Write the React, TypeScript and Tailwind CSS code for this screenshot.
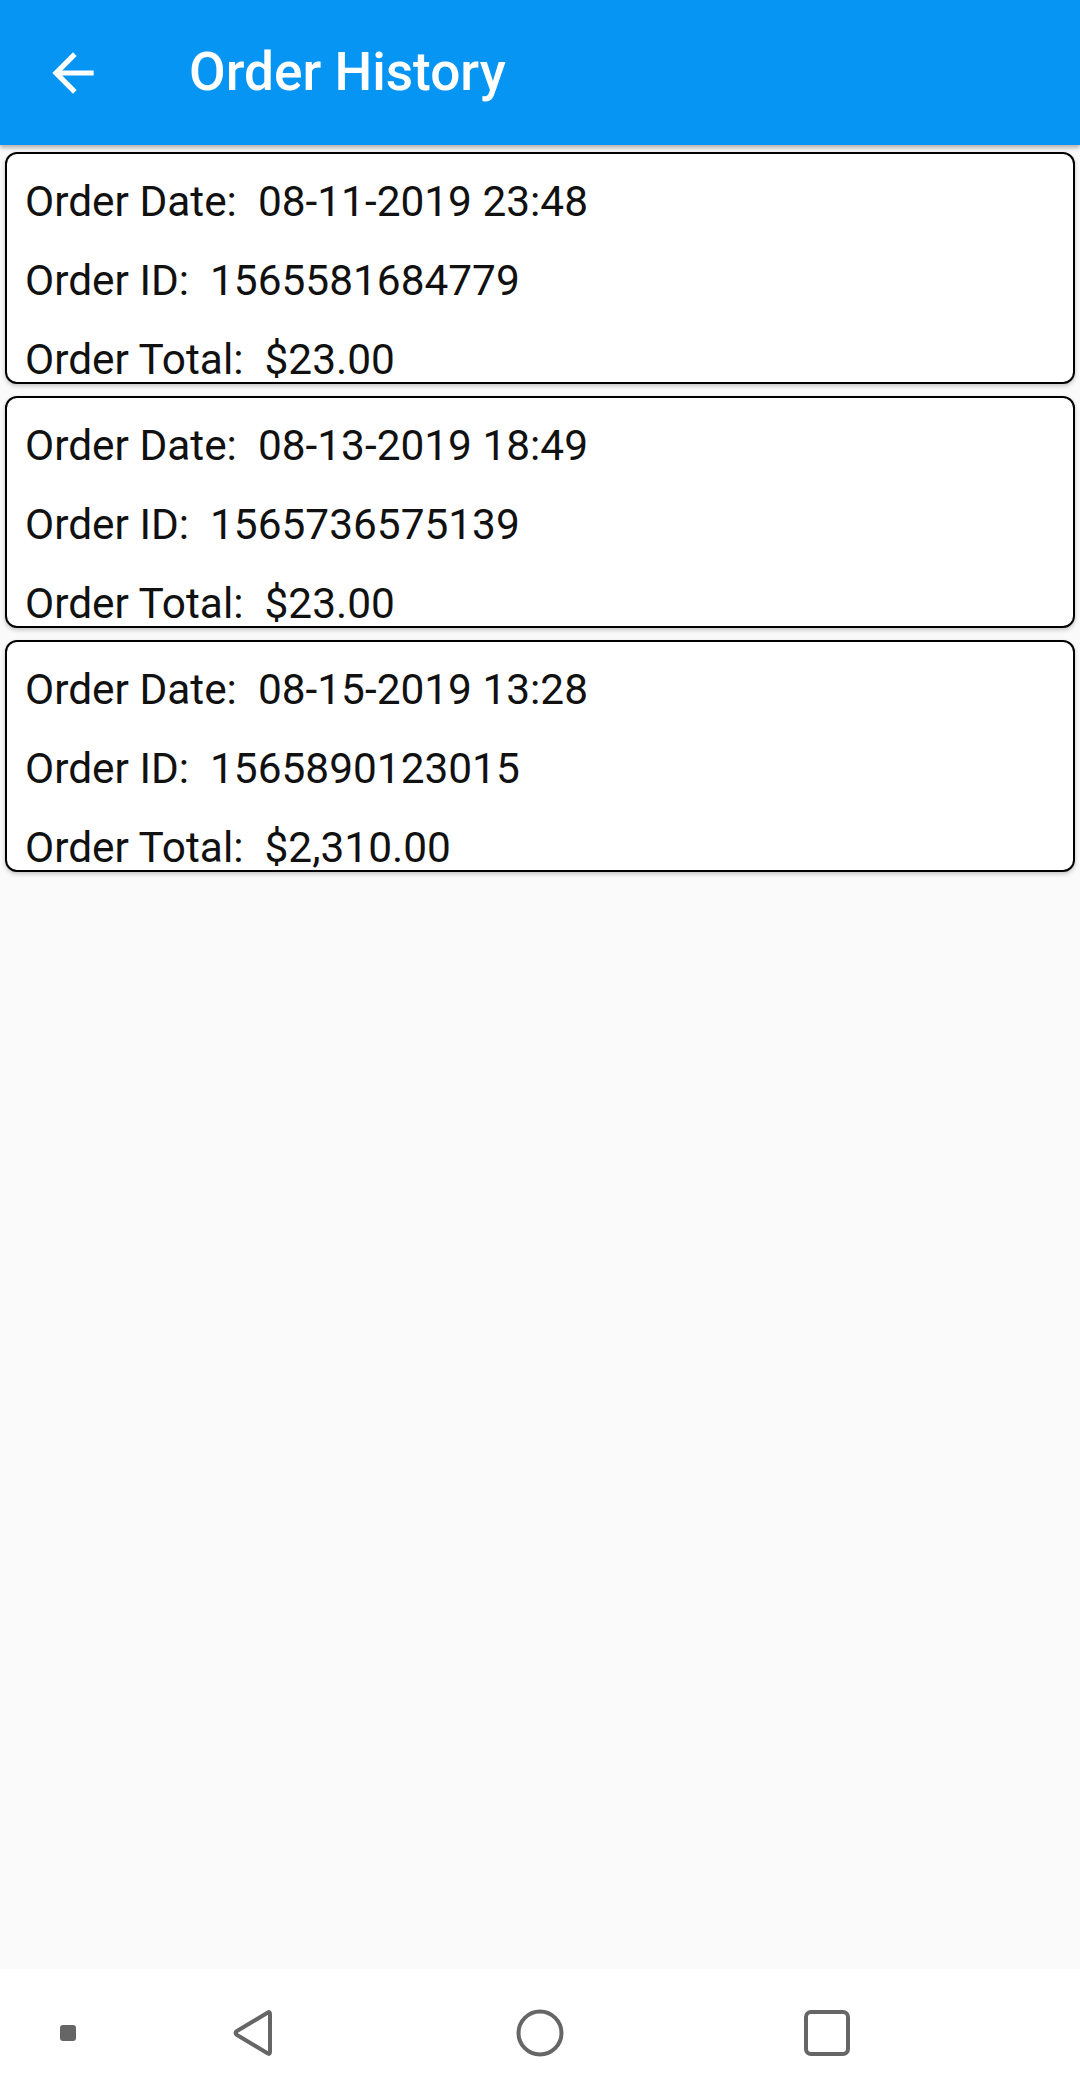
import React from "react";

const orders = [
  { date: "08-11-2019 23:48", id: "1565581684779", total: "$23.00" },
  { date: "08-13-2019 18:49", id: "1565736575139", total: "$23.00" },
  { date: "08-15-2019 13:28", id: "1565890123015", total: "$2,310.00" },
];

function OrderCard({ date, id, total }: { date: string; id: string; total: string }) {
  return (
    <div className="mx-[5px] h-[232px] overflow-hidden rounded-[12px] border-[2.5px] border-black bg-white pl-[18px] pt-[8px] shadow-[0_2px_4px_rgba(0,0,0,0.22)]">
      <div className="whitespace-pre text-[42.4px] leading-[79px] text-[#111]">{`Order Date:  ${date}`}</div>
      <div className="whitespace-pre text-[42.4px] leading-[79px] text-[#111]">{`Order ID:  ${id}`}</div>
      <div className="whitespace-pre text-[42.4px] leading-[79px] text-[#111]">{`Order Total:  ${total}`}</div>
    </div>
  );
}

export default function App() {
  return (
    <div
      className="flex h-screen w-full flex-col bg-[#fafafa]"
      style={{ fontFamily: "Roboto, 'Noto Sans', Arial, sans-serif" }}
    >
      <header className="relative z-10 flex h-[145px] shrink-0 items-center bg-[#0795f3] shadow-[0_3px_4px_rgba(0,0,0,0.28)]">
        <div className="ml-[42px] flex h-[62px] w-[62px] items-center justify-center">
          <svg width="62" height="62" viewBox="0 0 24 24" fill="#ffffff">
            <path d="M20 11H7.83l5.59-5.59L12 4l-8 8 8 8 1.41-1.41L7.83 13H20v-2z" />
          </svg>
        </div>
        <h1 className="ml-[85px] text-[53.2px] font-medium leading-none text-white">Order History</h1>
      </header>

      <main className="flex flex-1 flex-col gap-[12px] pt-[7px]">
        {orders.map((o) => (
          <OrderCard key={o.id} {...o} />
        ))}
      </main>

      <nav className="flex h-[127px] shrink-0 items-center bg-white">
        <div className="ml-[60px] h-[16px] w-[16px] rounded-[3px] bg-[#666]" />
        <svg className="ml-[156px]" width="42" height="46" viewBox="0 0 42 46">
          <path
            d="M38 4 L38 42 Q38 45 35.5 43.2 L5 25 Q2 23 5 21 L35.5 2.8 Q38 1 38 4 Z"
            fill="none"
            stroke="#666"
            strokeWidth="4"
            strokeLinejoin="round"
          />
        </svg>
        <svg className="ml-[242px]" width="48" height="48" viewBox="0 0 48 48">
          <circle cx="24" cy="24" r="21.5" fill="none" stroke="#666" strokeWidth="4" />
        </svg>
        <div className="ml-[240px] h-[46px] w-[46px] rounded-[7px] border-[4px] border-[#666]" />
      </nav>
    </div>
  );
}
